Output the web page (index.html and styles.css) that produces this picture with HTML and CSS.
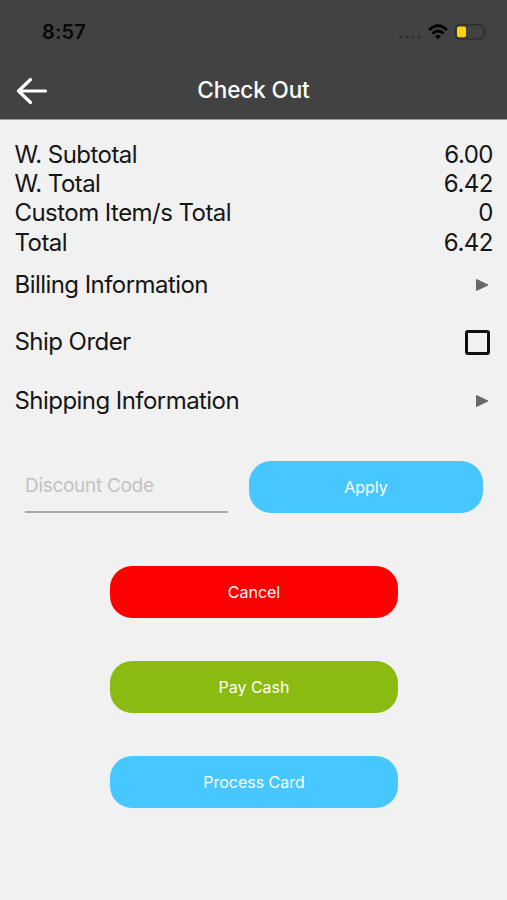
FILE: index.html
```html
<!DOCTYPE html>
<html lang="en"><head><meta charset="utf-8"><meta name="viewport" content="width=device-width, initial-scale=1"><title>Check Out</title><link rel="stylesheet" href="styles.css"></head>
<body>
<header class="top">
<div class="status"><span class="time">8:57</span>
<span class="indicators"><svg class="signal" width="24" height="6" viewBox="0 0 24 6" fill="#2d2d2d"><circle cx="3" cy="3" r="1.500"/><circle cx="9" cy="3" r="1.500"/><circle cx="15" cy="3" r="1.500"/><circle cx="21" cy="3" r="1.500"/></svg>
<svg class="wifi" width="20" height="16" viewBox="0 0 20 16" fill="none" stroke="#000" stroke-width="2.800"><path d="M1 6Q10-2.500 19 6M4.300 9.500Q10 4.500 15.700 9.500"/><path d="M7 12.200Q10 9.700 13 12.200L10 15.200Z" fill="#000" stroke="none"/></svg>
<svg class="battery" width="33" height="16" viewBox="0 0 33 16"><rect x=".7" y=".9" width="28" height="14" rx="4" fill="none" stroke="#2b2b2b" stroke-width="1.200"/><rect x="2" y="2.500" width="9" height="10.800" rx="2" fill="#fdd40c"/><path d="M30 5.500q3 2.500 0 5z" fill="#2b2b2b"/></svg></span></div>
<div class="nav"><svg class="back" width="32" height="28" viewBox="0 0 32 28" fill="none" stroke="#fff" stroke-width="3.200" stroke-linecap="round" stroke-linejoin="round"><path d="M29.500 14H2.500M14.500 2.500L2.500 14L14.500 25.500"/></svg><h1 class="title">Check Out</h1></div>
</header>
<main class="content">
<dl class="totals"><div class="line"><dt>W. Subtotal</dt><dd>6.00</dd></div><div class="line"><dt>W. Total</dt><dd>6.42</dd></div><div class="line"><dt>Custom Item/s Total</dt><dd>0</dd></div><div class="line"><dt>Total</dt><dd>6.42</dd></div></dl>
<div class="row billing"><span>Billing Information</span><svg class="arrow" width="13" height="12"><path d="M.5 .5L12 6L.5 11.500Z"/></svg></div>
<label class="row ship"><span>Ship Order</span><input class="check" type="checkbox"></label>
<div class="row shipping"><span>Shipping Information</span><svg class="arrow" width="13" height="12"><path d="M.5 .5L12 6L.5 11.500Z"/></svg></div>
<div class="discount"><input class="code" placeholder="Discount Code" aria-label="Discount Code"><button class="btn apply">Apply</button></div>
<div class="actions"><button class="btn cancel">Cancel</button><button class="btn cash">Pay Cash</button><button class="btn card">Process Card</button></div>
</main></body></html>
```
FILE: styles.css
```css
*{box-sizing:border-box}
body{margin:0;min-height:900px;background:#f1f1f1;color:#161616;font-family:Inter,"Liberation Sans",sans-serif}
.top{height:120px;background:#424242;border-bottom:1px solid #9a9a9a}
.status{height:64px;padding:0 18px 0 42px;display:flex;align-items:center;justify-content:space-between}
.time{font-size:20px;font-weight:600;color:#080808;letter-spacing:.2px}
.indicators{display:flex;align-items:center}
.signal{margin-right:6px;margin-top:10px}
.wifi{margin-right:7px}
.battery{margin-right:1px}
.nav{height:54px;padding:0 16px;display:grid;grid-template-columns:32px 1fr 32px;align-items:center}
.title{margin:-2px 0 0;text-align:center;color:#fff;font-size:22.500px;font-weight:500;line-height:28px;letter-spacing:-.1px}
.content{padding:20px 14px 0 15px;font-size:24px;letter-spacing:-.55px}
.totals{margin:0}
.line{display:flex;justify-content:space-between;height:29.200px;line-height:29.200px}
dt{margin-left:-.5px}
dd{margin:0}
.line dd{letter-spacing:-.5px}
.row{display:flex;align-items:center;justify-content:space-between;height:30px}
.row span{height:30px;line-height:30px;margin-left:-.5px}
.billing{margin-top:13.200px}
.ship{margin-top:27px}
.shipping{margin-top:29px}
.arrow{fill:#686868;stroke:#686868;stroke-width:1px;stroke-linejoin:round;margin-right:4px}
.check{appearance:none;width:25px;height:25px;margin:1px 3px 0 0;border:3px solid #111;border-radius:3px}
.discount{display:flex;margin:45px 10px 0;justify-content:space-between}
.code{width:203px;height:52px;padding:0;border:0;border-bottom:2px solid #a9a9a9;background:transparent;font:19px Inter,sans-serif;letter-spacing:-.3px}
.code::placeholder{color:#c2c2c2}
.btn{height:52px;border:0;border-radius:22px;padding:0;color:#fff;font:16px Inter,sans-serif}
.apply{width:234px;background:#46c7ff}
.actions{display:flex;flex-direction:column;align-items:center;gap:43px;margin-top:53px}
.actions .btn{width:288px}
.cancel{background:#f00}
.cash{background:#8bbb11}
.card{background:#46c7ff}
```
